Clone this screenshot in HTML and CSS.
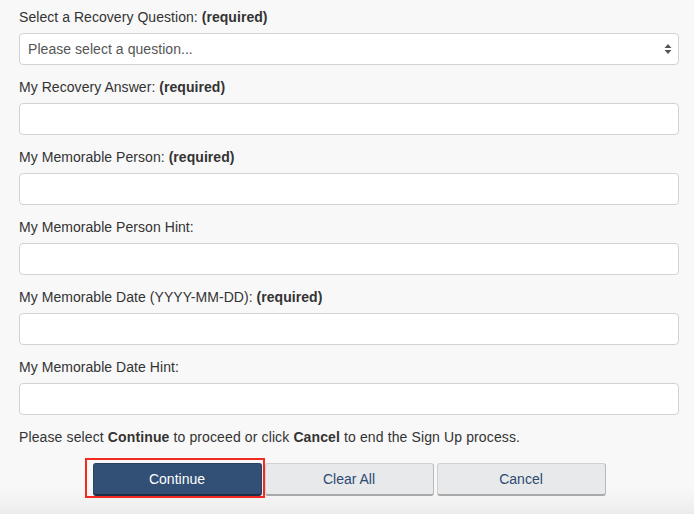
FILE: index.html
```
<!DOCTYPE html>
<html>
<head>
<meta charset="utf-8">
<link rel="stylesheet" href="styles.css">
</head>
<body>
<form class="form">
  <div class="group">
    <label class="label">Select a Recovery Question: <b>(required)</b></label>
    <div class="select">
      <span class="placeholder">Please select a question...</span>
      <svg class="arrows" width="8" height="12" viewBox="0 0 8 12"><path d="M4 1 L7.5 5 L0.5 5 Z M4 11 L7.5 7 L0.5 7 Z" fill="#555"/></svg>
    </div>
  </div>
  <div class="group">
    <label class="label">My Recovery Answer: <b>(required)</b></label>
    <div class="input"></div>
  </div>
  <div class="group">
    <label class="label">My Memorable Person: <b>(required)</b></label>
    <div class="input"></div>
  </div>
  <div class="group">
    <label class="label">My Memorable Person Hint:</label>
    <div class="input"></div>
  </div>
  <div class="group">
    <label class="label">My Memorable Date (YYYY-MM-DD): <b>(required)</b></label>
    <div class="input"></div>
  </div>
  <div class="group">
    <label class="label">My Memorable Date Hint:</label>
    <div class="input"></div>
  </div>
  <p class="note">Please select <b>Continue</b> to proceed or click <b>Cancel</b> to end the Sign Up process.</p>
  <div class="buttons">
    <span class="highlight"><button type="button" class="btn primary">Continue</button></span>
    <button type="button" class="btn">Clear All</button>
    <button type="button" class="btn">Cancel</button>
  </div>
</form>
</body>
</html>
```
FILE: styles.css
```
html, body {
  margin: 0;
  padding: 0;
  height: 514px;
  overflow: hidden;
}
body {
  background: linear-gradient(to bottom, #f8f8f8 0, #f8f8f8 488px, #ececec 514px);
  font-family: "Liberation Sans", Arial, Helvetica, sans-serif;
  font-size: 14px;
  color: #333;
  letter-spacing: 0.05px;
}
.form {
  padding: 7px 15px 0 19px;
  width: 660px;
}
.group {
  margin-bottom: 12px;
}
.label {
  display: block;
  line-height: 20px;
  height: 20px;
  margin-bottom: 6px;
}
.label b {
  font-weight: bold;
}
.input, .select {
  box-sizing: border-box;
  height: 32px;
  background: #fff;
  border: 1px solid #d2d2d2;
  border-radius: 4px;
}
.select {
  display: flex;
  align-items: center;
  justify-content: space-between;
  padding: 0 6px 0 8px;
}
.placeholder {
  color: #555;
}
.arrows {
  display: block;
}
.note {
  margin: 0;
  line-height: 20px;
  letter-spacing: 0.12px;
}
.buttons {
  display: flex;
  justify-content: center;
  gap: 3px;
  margin-top: 16px;
}
.highlight {
  position: relative;
  display: block;
}
.highlight::after {
  content: "";
  position: absolute;
  left: -8px;
  right: -3px;
  top: -5px;
  bottom: -2px;
  border: 2px solid #f22a1f;
  pointer-events: none;
}
.btn {
  display: block;
  box-sizing: border-box;
  width: 169px;
  height: 33px;
  margin: 0;
  padding: 0;
  font-family: "Liberation Sans", Arial, Helvetica, sans-serif;
  font-size: 14px;
  color: #2c4a72;
  background: #e8e9eb;
  border: 1px solid #d0d0d0;
  border-bottom: 2px solid #a9a9a9;
  border-right-color: #b8b8b8;
  border-radius: 3px;
}
.btn.primary {
  background: #324f76;
  color: #fff;
  border-color: #2a4364;
  border-bottom-color: #1e2f47;
}
```
